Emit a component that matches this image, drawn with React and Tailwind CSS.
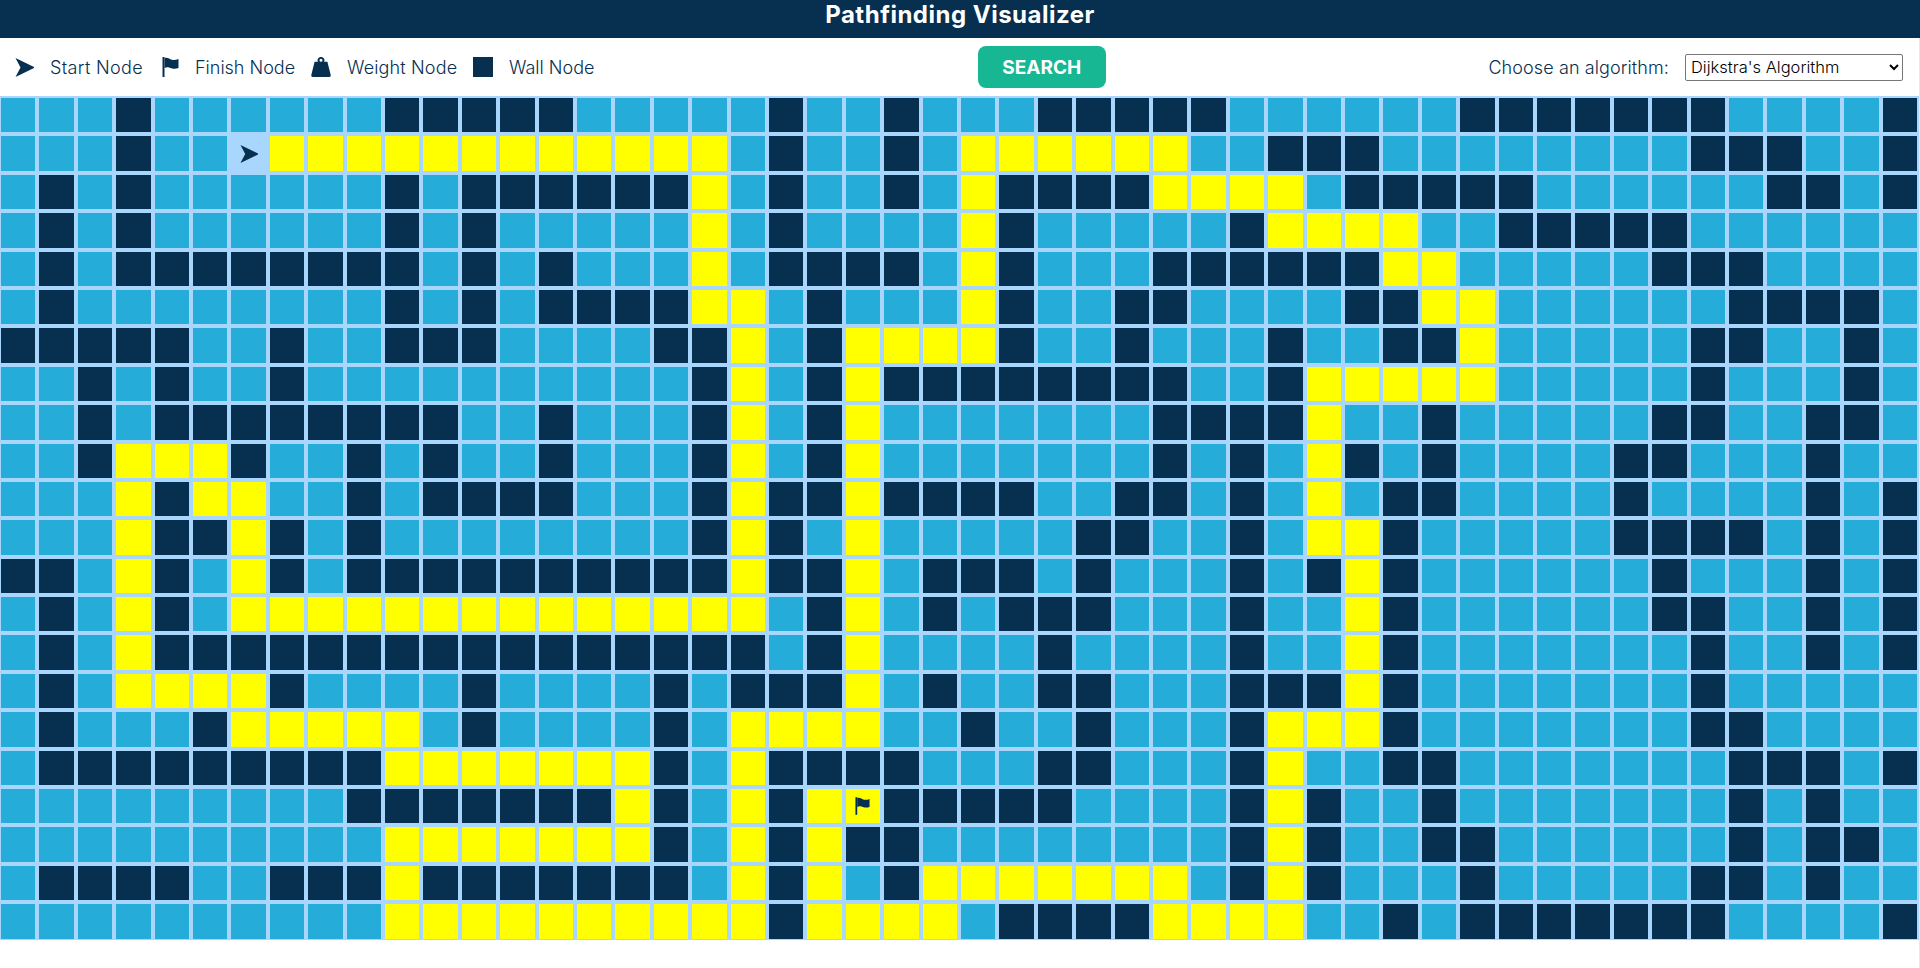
const LEFT = [
  "...#......#####.....#..#.",
  "...#..Syyyyyyyyyyyy.#..#.",
  ".#.#......#.######y.#..#.",
  ".#.#......#.#.....y.#....",
  ".#.########.#.#...y.####.",
  ".#........#.#.####yy.#...",
  "#####..#..###....##y.#yyy",
  "..#.#..#..........#y.#y##",
  "..#.########..#...#y.#y..",
  "..#yyy#..#.#..#...#y.#y..",
  "...y#yy..#.####...#y##y##",
  "...y##y#.#........#y#.y..",
  "##.y#.y#.##########y##y.#",
  ".#.y#.yyyyyyyyyyyyyy.#y.#",
  ".#.y################.#y..",
  ".#.yyyy#....#....#.###y.#",
  ".#...#yyyyy.#....#.yyyy..",
  ".#########yyyyyyy#.y####.",
  ".........#######y#.y#yF##",
  "..........yyyyyyy#.y#y##.",
  ".####..###y#######.y#y.#y",
  "..........yyyyyyyyyy#yyyy",
];

const RIGHT = [
  "..#####......#######....#",
  "yyyyyy..###........###..#",
  "y####yyyy.#####......##.#",
  "y#.....#yyyy..#####......",
  "y#...######yy.....###....",
  "y#..##....##yy......####.",
  "y#..#...#..##y.....##..#.",
  "######..#yyyyy.....#...#.",
  ".....####y..#.....##..##.",
  ".....#.#.y#.#....##...#..",
  "##..##.#.y.##....#....#.#",
  "...##..#.yy#.....####.#.#",
  "##.#...#.#y#......#...#.#",
  ".###...#..y#......##..#.#",
  "..#....#..y#.......#..#.#",
  "..##...###y#.......#.....",
  "#..#...#yyy#.......##....",
  "..##...#y..##.......###.#",
  "###....#y#..#.......#.#..",
  ".......#y#..##......#.##.",
  "yyyyyy.#y#...#.....##.#..",
  ".####yyyy..#.#######....#",
];

const ROWS = LEFT.map((row, i) => row + RIGHT[i]);

function StartIcon({ className }) {
  return (
    <svg viewBox="0 0 19 19" className={className}>
      <path d="M0.5 0 L19 9 V10 L0.5 19 L5.5 9.5 Z" fill="#072f50" />
    </svg>
  );
}

function FlagIcon({ className }) {
  return (
    <svg viewBox="0 0 17 20" className={className}>
      <path d="M0.5 0 H2.5 V20 H0.5 Z" fill="#072f50" />
      <path d="M2.5 1 C6 0 7 2 10 2.8 C12 3.3 14.5 2.8 16.5 2 V11 C14 12 12 12 10 11.4 C7 10.6 5.5 9.5 2.5 11 Z" fill="#072f50" />
    </svg>
  );
}

function WeightIcon({ className }) {
  return (
    <svg viewBox="0 0 20 20" className={className}>
      <path
        fillRule="evenodd"
        d="M10 0 A3.2 3.2 0 0 1 13 4.8 H16.4 L19.7 18 Q20 20 18 20 H2 Q0 20 0.3 18 L3.6 4.8 H7 A3.2 3.2 0 0 1 10 0 Z M10 1.8 A1.5 1.5 0 1 0 10 4.8 A1.5 1.5 0 1 0 10 1.8 Z"
        fill="#072f50"
      />
    </svg>
  );
}

function Legend({ icon, label, textClass }) {
  return (
    <div className="flex items-center">
      {icon}
      <span className={`text-[18px] font-light whitespace-nowrap text-[#072f50] ${textClass}`}>{label}</span>
    </div>
  );
}

function Cell({ kind }) {
  if (kind === "S") {
    return (
      <div className="flex items-center justify-center">
        <StartIcon className="w-[18px] h-[18px]" />
      </div>
    );
  }
  if (kind === "F") {
    return (
      <div className="flex items-center justify-center bg-[#ffff00]">
        <FlagIcon className="w-[15px] h-[18px]" />
      </div>
    );
  }
  if (kind === "#") return <div className="bg-[#072f50]" />;
  if (kind === "y") return <div className="bg-[#ffff00]" />;
  return <div className="bg-[#26acd9]" />;
}

export default function App() {
  return (
    <div className="min-h-[968px] bg-white font-['Inter',sans-serif]">
      {/* Title bar */}
      <header className="h-[38px] bg-[#072f50] flex items-center justify-center">
        <h1 className="text-[24px] font-bold tracking-[0.5px] text-white leading-none -mt-[8px]">Pathfinding Visualizer</h1>
      </header>

      <div className="border-r border-[#e8e8e8] min-h-[930px]">
        {/* Legend, search button, algorithm select */}
        <nav className="h-[58px] flex items-center justify-between pl-[15px] pr-[16px]">
          <div className="flex items-center w-[580px]">
            <Legend icon={<StartIcon className="w-[19px] h-[19px] mr-[16px]" />} label="Start Node" textClass="w-[112px] tracking-[0.35px]" />
            <Legend icon={<FlagIcon className="w-[17px] h-[20px] mr-[16px]" />} label="Finish Node" textClass="w-[116px]" />
            <Legend icon={<WeightIcon className="w-[20px] h-[20px] mr-[16px]" />} label="Weight Node" textClass="w-[126px] tracking-[0.15px]" />
            <Legend icon={<div className="w-[20px] h-[20px] bg-[#072f50] mr-[16px]" />} label="Wall Node" />
          </div>
          <button className="w-[128px] h-[42px] pt-[2px] rounded-[8px] bg-[#17b794] text-white font-bold text-[19px]">SEARCH</button>
          <div className="flex items-center">
            <label className="text-[18px] font-light tracking-[0.1px] text-[#072f50] mr-[16px]">Choose an algorithm:</label>
            <select className="w-[218px] h-[27px] border border-[#767676] rounded-[2px] bg-white text-[16.5px] font-light text-black pl-[1px]">
              <option>Dijkstra's Algorithm</option>
              <option>A* Search</option>
              <option>Greedy Best-first Search</option>
            </select>
          </div>
        </nav>

        {/* Grid */}
        <div className="bg-[#a8d6fc] grid grid-cols-[repeat(50,minmax(0,1fr))] auto-rows-[34.4px] gap-[4px] pl-[1px] pr-[2px] pt-[2px] pb-[1px]">
          {ROWS.map((row, r) =>
            row.split("").map((kind, c) => <Cell key={`${r}-${c}`} kind={kind} />)
          )}
        </div>
      </div>
    </div>
  );
}
